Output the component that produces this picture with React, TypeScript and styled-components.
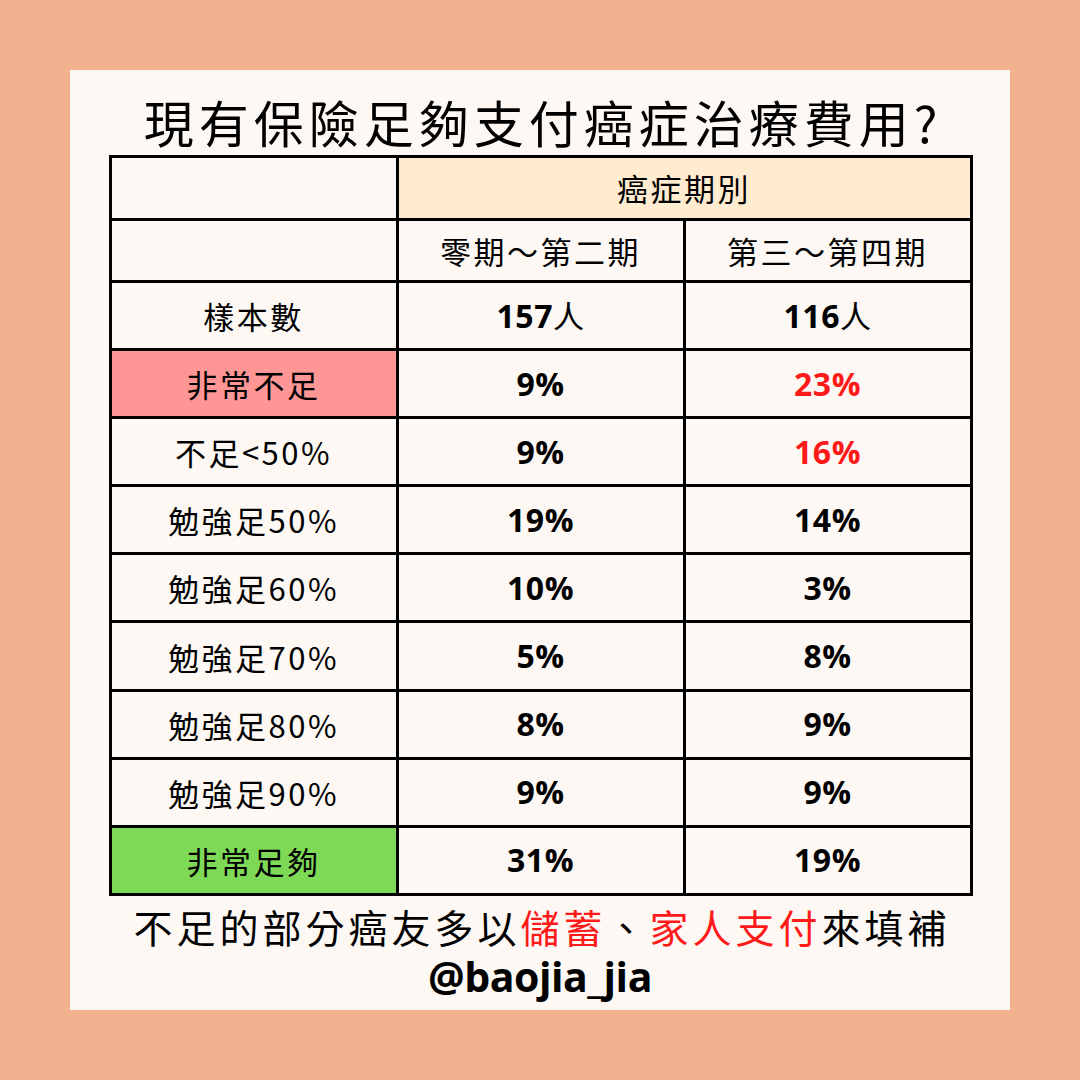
import React from "react";
import styled, { createGlobalStyle } from "styled-components";

const Global = createGlobalStyle`
  html, body { margin: 0; padding: 0; }
  body { background: #F0B28F; font-family: "Noto Sans CJK TC", "Noto Sans", sans-serif; }
`;

const Page = styled.div`
  width: 1080px;
  height: 1080px;
  background: #F0B28F;
  padding: 70px;
  box-sizing: border-box;
`;

const Card = styled.div`
  width: 940px;
  height: 940px;
  background: #FDF8F4;
  display: flex;
  flex-direction: column;
  align-items: center;
  padding-top: 19px;
  box-sizing: border-box;
`;

const Title = styled.h1`
  margin: 0 0 0 6px;
  font-size: 50px;
  line-height: 64px;
  font-weight: 400;
  color: #000;
  letter-spacing: 5px;
`;

const Table = styled.table`
  margin-top: 2px;
  margin-left: 1px;
  border-collapse: collapse;
  width: 864px;
  table-layout: fixed;
  border: 3px solid #000;
`;

type CellProps = { $bg?: string; $h?: number; $bold?: boolean; $color?: string };

const Cell = styled.td<CellProps>`
  border: 3px solid #000;
  background: ${(p) => p.$bg || "transparent"};
  height: ${(p) => p.$h || 65.1}px;
  padding: 0;
  text-align: center;
  vertical-align: middle;
  color: ${(p) => p.$color || "#000"};
  font-size: ${(p) => (p.$bold ? 32 : 31)}px;
  font-weight: ${(p) => (p.$bold ? 700 : 400)};
  letter-spacing: ${(p) => (p.$bold ? 0.5 : 2.5)}px;
  font-family: ${(p) =>
    p.$bold
      ? '"Open Sans", "Noto Sans CJK TC", sans-serif'
      : '"Noto Sans CJK TC", sans-serif'};
  line-height: 1;
`;

const Footer = styled.p`
  margin: 2px 0 0 4px;
  font-size: 39px;
  line-height: 56px;
  font-weight: 400;
  letter-spacing: 4px;
  color: #000;
`;

const Red = styled.span`
  color: #FF1A1A;
`;

const Handle = styled.p`
  margin: 0;
  font-family: "Open Sans", sans-serif;
  font-weight: 700;
  font-size: 41px;
  line-height: 44px;
  letter-spacing: -0.5px;
  color: #000;
`;

const Person = styled.span`
  font-family: "Noto Sans CJK TC", sans-serif;
  font-weight: 400;
  font-size: 31px;
`;

type Row = { label: string; a: string; b: string; bg?: string; redB?: boolean };

const rows: Row[] = [
  { label: "非常不足", a: "9%", b: "23%", bg: "#FF9696", redB: true },
  { label: "不足<50%", a: "9%", b: "16%", redB: true },
  { label: "勉強足50%", a: "19%", b: "14%" },
  { label: "勉強足60%", a: "10%", b: "3%" },
  { label: "勉強足70%", a: "5%", b: "8%" },
  { label: "勉強足80%", a: "8%", b: "9%" },
  { label: "勉強足90%", a: "9%", b: "9%" },
  { label: "非常足夠", a: "31%", b: "19%", bg: "#7ED957" },
];

export default function App() {
  return (
    <Page>
      <Global />
      <Card>
        <Title>現有保險足夠支付癌症治療費用?</Title>
        <Table>
          <tbody>
            <tr>
              <Cell $h={59.5} />
              <Cell $h={59.5} colSpan={2} $bg="#FFEBCF">
                癌症期別
              </Cell>
            </tr>
            <tr>
              <Cell $h={59.5} />
              <Cell $h={59.5}>零期～第二期</Cell>
              <Cell $h={59.5}>第三～第四期</Cell>
            </tr>
            <tr>
              <Cell>樣本數</Cell>
              <Cell $bold>
                157<Person>人</Person>
              </Cell>
              <Cell $bold>
                116<Person>人</Person>
              </Cell>
            </tr>
            {rows.map((r) => (
              <tr key={r.label}>
                <Cell $bg={r.bg}>{r.label}</Cell>
                <Cell $bold>{r.a}</Cell>
                <Cell $bold $color={r.redB ? "#FF1A1A" : undefined}>
                  {r.b}
                </Cell>
              </tr>
            ))}
          </tbody>
        </Table>
        <Footer>
          不足的部分癌友多以<Red>儲蓄</Red>、<Red>家人支付</Red>來填補
        </Footer>
        <Handle>@baojia_jia</Handle>
      </Card>
    </Page>
  );
}
